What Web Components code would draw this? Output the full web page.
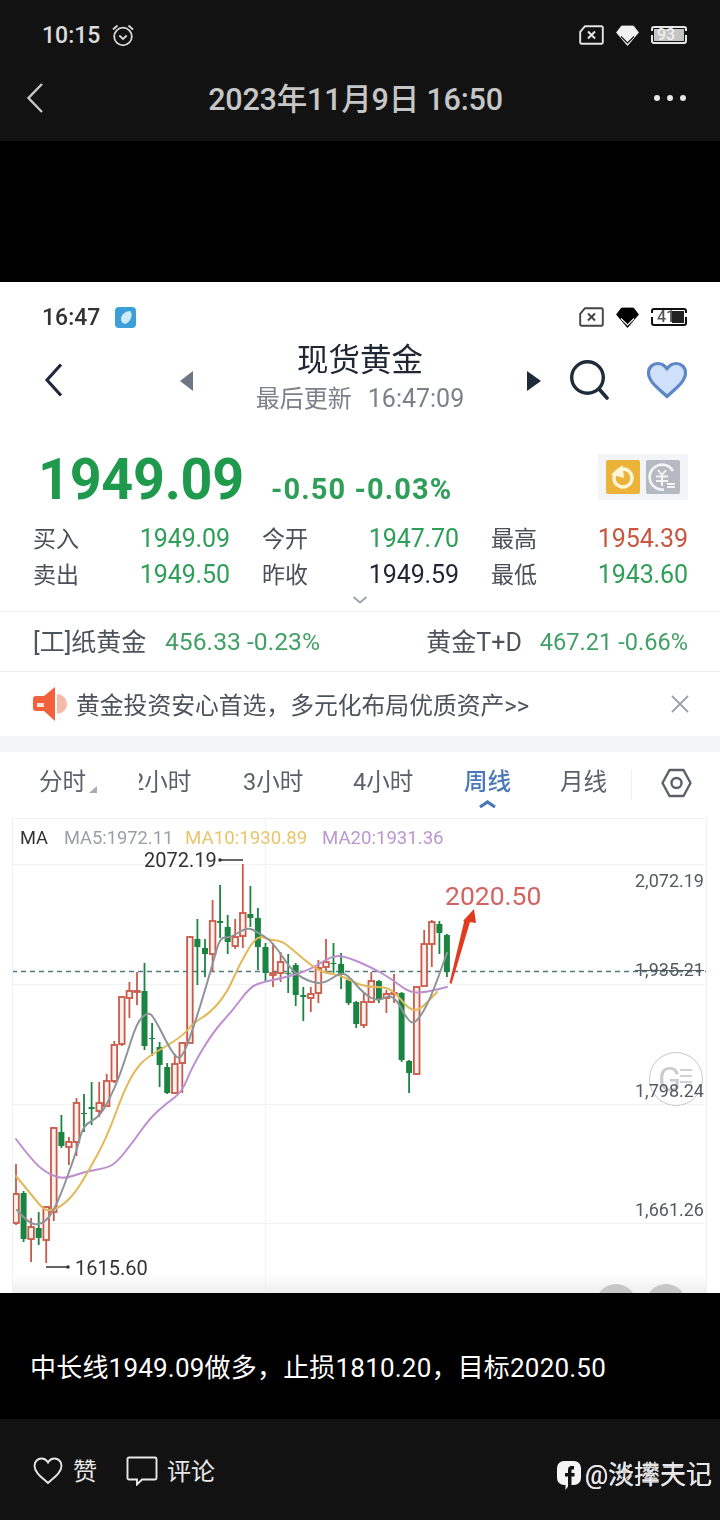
<!DOCTYPE html>
<html lang="zh"><head><meta charset="utf-8"><title>现货黄金</title>
<style>
html,body{margin:0;padding:0;background:#000}
body{width:720px;height:1520px;overflow:hidden;font-family:Roboto,"Noto Sans CJK SC",sans-serif}
.stack{display:flex;flex-direction:column;width:720px;height:1520px}
.gap{height:141px;background:#000;flex:none}
</style></head><body>
<div class="stack">
<top-bar></top-bar>
<div class="gap"></div>
<quote-screen></quote-screen>
<post-caption>中长线1949.09做多，止损1810.20，目标2020.50</post-caption>
<action-bar></action-bar>
</div>
<script>
const FONT='Roboto,"Noto Sans CJK SC",sans-serif';
function def(name,css,html,init){
  customElements.define(name,class extends HTMLElement{
    constructor(){super();const s=this.attachShadow({mode:'open'});
      s.innerHTML=`<style>:host{display:block;font-family:${FONT}}${css}</style>${typeof html==='function'?html(this):html}`;}
    connectedCallback(){if(init&&!this._d){this._d=1;init(this.shadowRoot,this)}}
  });
}
const sim=c=>`<svg width="25" height="20" viewBox="0 0 25 20"><path d="M6 1.2H22.5a1.3 1.3 0 0 1 1.3 1.3V17.5a1.3 1.3 0 0 1-1.3 1.3H2.5a1.3 1.3 0 0 1-1.3-1.3V6.8z" fill="none" stroke="${c}" stroke-width="1.9"/><path d="M9 6.5l7 7m0-7l-7 7" stroke="${c}" stroke-width="2" fill="none"/></svg>`;
const gem=(f,l)=>`<svg width="23" height="21" viewBox="0 0 23 21"><path d="M5.500 1H17.500L22.500 7.500 11.500 20.500 .5 7.500z" fill="${f}" stroke="${f}" stroke-width=".8" stroke-linejoin="round"/><path d="M5 11.500l6.500 6.500L18 11.500" fill="none" stroke="${l}" stroke-width="1.100"/></svg>`;

def('status-bar',`
:host{height:70px;flex:none}
.r{display:flex;align-items:center;height:70px;padding:0 33px 0 42px}
.t{font-size:23px;font-weight:500;color:var(--fg);width:69px}
.l{display:flex;align-items:center;width:100px}
.sp{flex:1}
.ic{display:flex;align-items:center;gap:12px}
.bat{position:relative;display:block;width:36px;height:18px;box-sizing:border-box;border:2px solid var(--bc);border-radius:3px;padding:1px}
.bat::before,.bat::after{content:"";position:absolute;top:3px;width:2px;height:4px;background:var(--sf)}
.bat::before{left:-2px}.bat::after{right:-2px}
.in{display:block;position:relative;height:100%;background:var(--bb);font-size:16px;line-height:12px;color:var(--bt);padding-left:3px;font-weight:500}
.in i{position:absolute;top:0;bottom:0;right:0;width:var(--bw);background:var(--bf)}
.in b{position:relative;font-weight:500}
`,h=>`<div class="r"><span class="t">${h.getAttribute('time')}</span><span class="l"><slot></slot></span><span class="sp"></span>
<span class="ic">${sim(h.getAttribute('sim'))}${gem(h.getAttribute('gf'),h.getAttribute('gs'))}<span class="bat"><span class="in"><i></i><b>${h.getAttribute('level')}</b></span></span></span></div>`);

def('top-bar',`
:host{background:#121212;height:141px;flex:none;display:block}
status-bar{--fg:#dcdcdc;--bc:#e6e6e6;--bt:#eeeeee;--bb:#c4c4c4;--bf:#c4c4c4;--bw:0px;--sf:#121212}
.n{display:flex;align-items:center;height:56px;padding:0 34px 0 26px;position:relative}
h1{flex:1;margin:0;text-align:center;font-size:30.500px;font-weight:500;color:#c6c6c6;letter-spacing:-.2px;padding-left:13px;margin-top:-2px}
.d{display:flex;gap:7px}.d i{width:6px;height:6px;border-radius:50%;background:#e6e6e6}
`,`<status-bar time="10:15" level="93" sim="#e4e4e4" gf="#f2f2f2" gs="#121212">
<svg width="24" height="25" viewBox="0 0 24 25"><circle cx="12" cy="13.500" r="8.800" fill="none" stroke="#d8d8d8" stroke-width="1.800"/><path d="M8.300 12.500l3.700 3.500 3.700-3.500" fill="none" stroke="#d8d8d8" stroke-width="1.800"/><path d="M2 6.500L6.500 2.500M22 6.500L17.500 2.500" stroke="#d8d8d8" stroke-width="1.800"/></svg></status-bar>
<div class="n"><svg width="18" height="32" viewBox="0 0 18 32"><path d="M16 2L2.500 16 16 30" fill="none" stroke="#c8c8c8" stroke-width="2.400"/></svg>
<h1>2023年11月9日 16:50</h1><span class="d"><i></i><i></i><i></i></span></div>`);

def('quote-header',`
:host{height:56px;flex:none}
.r{display:flex;align-items:center;height:56px;padding:0 32px 0 44px}
.m{flex:none;width:334px;display:flex;flex-direction:column;align-items:center}
.m b{font-weight:400;font-size:31.500px;line-height:40px;color:#1f2733;letter-spacing:0;margin-top:-2px}
.m span{font-size:24px;line-height:36px;color:#7b8089;display:flex;gap:16px;white-space:nowrap}
.m em{font-style:normal;font-size:25px}
.tr{position:absolute;top:89px}
`,`<div class="r"><svg width="20" height="36" viewBox="0 0 20 36"><path d="M17 2.500L3 18l14 15.500" fill="none" stroke="#1f2b3a" stroke-width="3.200"/></svg>
<svg class="tr" style="left:180px" width="14" height="20" viewBox="0 0 14 20"><path d="M13 0V20L0 10z" fill="#6d7682"/></svg>
<div class="m" style="margin-left:129px"><b>现货黄金</b><span>最后更新<em>16:47:09</em></span></div>
<svg class="tr" style="left:527px" width="14" height="20" viewBox="0 0 14 20"><path d="M0 0V20L14 10z" fill="#1f2b3a"/></svg>
<svg style="margin-left:42px" width="40" height="40" viewBox="0 0 40 40"><circle cx="18.500" cy="17.500" r="15.800" fill="none" stroke="#1f2b3a" stroke-width="3.400"/><path d="M30 29l8 9" stroke="#1f2b3a" stroke-width="3.600" stroke-linecap="round"/></svg>
<svg style="margin-left:37px" width="42" height="38" viewBox="0 0 42 38"><path d="M21 35.500C13 28 2.500 21 2.500 11.800 2.500 6 7 2.500 11.800 2.500c4 0 7.200 2.200 9.200 5.500 2-3.300 5.200-5.500 9.200-5.500C35 2.500 39.500 6 39.500 11.800 39.500 21 29 28 21 35.500z" fill="#cfe0fb" stroke="#5d87c7" stroke-width="3.200" stroke-linejoin="round"/></svg></div>`);

def('price-block',`
:host{height:56px;margin-top:42px;flex:none}
.r{display:flex;align-items:center;height:56px;padding:0 32px 0 38px}
.w{display:block;width:233px;flex:none}
.p{display:inline-block;font-size:58px;font-weight:700;color:#1f9a4c;letter-spacing:-.3px;line-height:56px;transform:scaleX(.96);transform-origin:0 50%;margin-top:2px}
.c{font-size:29px;font-weight:700;color:#2f9e58;margin-top:22px;flex:1;white-space:nowrap;letter-spacing:1.100px}
.b{display:flex;gap:6px;background:#f2f4f7;padding:6px 8px;height:34px;margin-top:-2px}
.b i{display:block;width:34px;height:34px;border-radius:2px}
`,`<div class="r"><span class="w"><span class="p">1949.09</span></span><span class="c">-0.50 -0.03%</span>
<div class="b"><i style="background:#ecb33a"><svg width="34" height="34" viewBox="0 0 34 34"><circle cx="17" cy="18" r="9" fill="none" stroke="#fff7d8" stroke-width="3.400"/><path d="M5 14.500L16.500 5 18 18z" fill="#fff7d8"/></svg></i>
<i style="background:#b4b9c2"><svg width="34" height="34" viewBox="0 0 34 34"><path d="M27 11A12.500 12.500 0 1 0 18 29.500" fill="none" stroke="#f4f5f7" stroke-width="2.600"/><path d="M12 10l4 5 4-5M10 16.500h12M10 21h12M16 15v11M21 24h8M29 27h-8" fill="none" stroke="#f4f5f7" stroke-width="2"/></svg></i></div></div>`);

def('quote-table',`
:host{margin-top:14px;flex:none}
.g{display:grid;grid-template-columns:repeat(3,197px);column-gap:32px;padding-left:33px}
.c{display:flex;justify-content:space-between;align-items:center;height:36px}
.l{font-size:23px;color:#4c5159;margin-bottom:3px}
.v{font-size:25px;letter-spacing:-.1px}
.g0{color:#2f9e58}.k{color:#1e2633}.r{color:#c9573f}
`,()=>{const d=[['买入','1949.09','g0'],['今开','1947.70','g0'],['最高','1954.39','r'],['卖出','1949.50','g0'],['昨收','1949.59','k'],['最低','1943.60','g0']];
return `<div class="g">${d.map(x=>`<div class="c"><span class="l">${x[0]}</span><span class="v ${x[2]}">${x[1]}</span></div>`).join('')}</div>`});

def('expand-hint',`:host{height:19px;flex:none}.w{display:flex;justify-content:center;padding-top:4px}`,
`<div class="w"><svg width="16" height="8" viewBox="0 0 16 8"><path d="M1.500 1l6.500 5.500L14.500 1" fill="none" stroke="#9aa0a8" stroke-width="1.800"/></svg></div>`);

def('related-row',`
:host{height:59px;border-top:1px solid #eef0f2;border-bottom:1px solid #eef0f2;flex:none}
.r{display:flex;align-items:center;height:59px;padding:0 32px 0 33px;font-size:25px;color:#4d535b}
.g{color:#43a066;font-size:24.700px;white-space:nowrap}
.a{width:132px;margin-bottom:3px}.s{flex:1}.b{margin-right:18px;margin-bottom:3px}
`,`<div class="r"><span class="a">[工]纸黄金</span><span class="g">456.33 -0.23%</span><span class="s"></span><span class="b">黄金T+D</span><span class="g" style="font-size:23.600px">467.21 -0.66%</span></div>`);

def('ad-banner',`
:host{height:64px;flex:none}
.r{display:flex;align-items:center;height:64px;padding:0 30px 0 32px;font-size:23.800px;color:#4d535b}
span{flex:1;margin-left:9px;white-space:nowrap;margin-bottom:2px}
`,`<div class="r"><svg width="35" height="36" viewBox="0 0 35 36"><path d="M25 8a10 10 0 0 1 0 20z" fill="#f7b9a8"/><path d="M4 10h8L23 1v34L12 25H4a3 3 0 0 1-3-3V13a3 3 0 0 1 3-3z" fill="#f3603c"/><rect x="5" y="17" width="7" height="4" fill="#fde3db"/></svg>
<span>黄金投资安心首选，多元化布局优质资产&gt;&gt;</span>
<svg width="20" height="20" viewBox="0 0 20 20"><path d="M2 2l16 16M18 2L2 18" stroke="#9da3ab" stroke-width="1.900"/></svg></div>`);

def('chart-tabs',`
:host{height:66px;flex:none;background:#fff}
.r{display:flex;align-items:flex-start;height:66px;font-size:23.600px;color:#5c6169;padding-left:39px;position:relative}
span{white-space:nowrap;line-height:60px;display:block}
.cut{clip-path:inset(0 0 0 8px)}
.act{color:#4a78b8;font-weight:500;position:relative}
.act svg{position:absolute;left:15px;top:48px}
.tri{position:absolute;left:89px;top:34px}
.div{position:absolute;left:631px;top:18px;width:1px;height:30px;background:#eff1f3}
.hex{position:absolute;left:661px;top:15px}
`,`<div class="r"><span style="width:92px">分时</span><svg class="tri" width="8" height="7" viewBox="0 0 8 7"><path d="M8 0V7H0z" fill="#a8adb4"/></svg>
<span class="cut" style="width:112px">2小时</span><span style="width:110px">3小时</span><span style="width:111px">4小时</span>
<span class="act" style="width:96px">周线<svg width="17" height="8" viewBox="0 0 17 8"><path d="M1 7l7.500-5L16 7" fill="none" stroke="#4a78b8" stroke-width="3.200"/></svg></span><span>月线</span>
<i class="div"></i><svg class="hex" width="31" height="32" viewBox="0 0 31 32"><path d="M8.500 3h14l7 13-7 13h-14l-7-13z" fill="none" stroke="#5c6169" stroke-width="2.400" stroke-linejoin="round"/><circle cx="15.500" cy="16" r="5" fill="none" stroke="#5c6169" stroke-width="2.400"/></svg></div>`);

const C=[[1164,1225,1194,1223,'r'],[1191,1242,1193,1239,'g'],[1218,1262,1227,1239,'r'],[1212,1245,1228,1238,'g'],[1207,1263,1207,1240,'r'],[1127,1221,1128,1212,'r'],[1115,1148,1132,1146,'g'],[1137,1165,1142,1147,'r'],[1098,1156,1103,1142,'r'],[1094,1132,1113,1114,'g'],[1082,1125,1107,1109,'g'],[1082,1117,1103,1111,'r'],[1074,1107,1081,1106,'r'],[1041,1083,1045,1081,'r'],[996,1046,997,1044,'r'],[982,1018,991,998,'r'],[972,1005,991,992,'r'],[963,1050,991,1046,'g'],[1023,1056,1038,1039,'g'],[1042,1087,1047,1065,'g'],[1063,1094,1067,1093,'g'],[1054,1094,1064,1093,'r'],[1042,1093,1043,1063,'r'],[936,1043,937,1043,'r'],[919,985,939,947,'g'],[939,977,948,954,'g'],[900,972,921,954,'r'],[885,938,921,923,'g'],[915,954,927,942,'g'],[919,949,937,946,'r'],[864,948,913,936,'r'],[886,927,914,918,'g'],[908,970,918,947,'g'],[943,982,947,973,'g'],[943,987,973,975,'r'],[952,982,962,973,'r'],[954,993,973,974,'g'],[963,1006,965,995,'g'],[987,1021,995,997,'g'],[987,1012,994,998,'r'],[960,1003,968,993,'r'],[939,973,962,967,'r'],[943,973,963,964,'g'],[953,989,964,975,'g'],[978,1005,980,1003,'g'],[1001,1028,1002,1024,'g'],[993,1028,1002,1025,'r'],[972,1003,981,1002,'r'],[980,1003,981,1000,'g'],[990,1013,994,998,'r'],[974,1003,993,994,'r'],[992,1062,993,1060,'g'],[1060,1093,1061,1073,'g'],[986,1075,987,1074,'r'],[930,986,944,986,'r'],[920,967,922,944,'r'],[921,954,924,933,'g'],[934,977,935,972,'g']];
const MA5=[[17,1210],[28,1223],[40,1225],[50,1217],[60,1197],[77,1150],[83,1125],[100,1117],[115,1088],[125,1060],[137,1022],[147,1013],[153,1015],[173,1055],[182,1060],[197,1017],[213,963],[220,937],[230,938],[247,927],[257,932],[273,942],[293,973],[313,983],[325,983],[340,973],[348,975],[363,993],[378,1002],[393,993],[409,1023],[417,1022],[430,1000],[447,953]];
const MA10=[[16,1176],[30,1193],[43,1209],[50,1211],[62,1206],[75,1193],[88,1172],[107,1137],[123,1093],[135,1070],[147,1057],[182,1037],[193,1023],[210,1013],[227,993],[240,963],[257,935],[270,940],[282,941],[293,950],[313,967],[325,973],[340,975],[353,982],[367,987],[387,987],[397,995],[410,1010],[420,1010],[437,992]];
const MA20=[[16,1139],[33,1162],[50,1175],[65,1179],[83,1172],[107,1168],[117,1162],[133,1142],[150,1118],[167,1103],[182,1092],[192,1067],[213,1032],[233,1010],[250,987],[263,982],[283,978],[310,970],[333,955],[347,957],[373,968],[393,980],[410,993],[427,992],[447,987]];
function smooth(p){let d=`M${p[0][0]} ${p[0][1]}`;for(let i=1;i<p.length-1;i++){const m=[(p[i][0]+p[i+1][0])/2,(p[i][1]+p[i+1][1])/2];d+=`Q${p[i][0]} ${p[i][1]} ${m[0]} ${m[1]}`}const l=p[p.length-1];return d+`L${l[0]} ${l[1]}`}
function kline(){
  const RED='#c95a4a',GRN='#1b8442';let s='';
  C.forEach((c,i)=>{const x=+(16+7.56*i).toFixed(1);const col=c[4]==='r'?RED:GRN;
    s+=`<path d="M${x} ${c[0]}V${c[2]}M${x} ${c[3]}V${c[1]}" stroke="${col}" stroke-width="1.800"/>`;
    const h=Math.max(c[3]-c[2],1);
    if(c[4]==='r')s+=`<rect x="${x-2.800}" y="${c[2]}" width="5.600" height="${h}" fill="#fdf1ed" stroke="${col}" stroke-width="1.800"/>`;
    else s+=`<rect x="${x-3}" y="${c[2]}" width="6" height="${h}" fill="${col}"/>`;
  });
  return s;
}
def('kline-chart',`
:host{position:relative;height:475px;margin-left:12px;width:695px;box-sizing:border-box;border:1px solid #eff1f3;border-width:1px 1px 0;background:#fff;flex:none;overflow:hidden}
svg.c{position:absolute;left:-1px;top:-1px}
.lg{display:flex;font-size:18.300px;padding:9px 0 0 7px;line-height:20px;position:relative}
.lg span{white-space:nowrap}
.t{position:absolute;white-space:nowrap;line-height:1}
.ax{font-size:18px;color:#555a60;right:2px}
.shade{position:absolute;left:0;right:0;bottom:0;height:18px;background:linear-gradient(#fff0,#eeeeee)}
.g{position:absolute;left:636px;top:233px;width:54px;height:54px;box-sizing:border-box;border:1.500px solid #c6c8cb;border-radius:50%;background:#fffc}
.g b{position:absolute;left:8px;top:9px;font-size:34px;font-weight:400;line-height:34px;color:#c9cbce}
.g u{position:absolute;left:30px;width:12px;height:2px;background:#cfd1d4}
.btn{position:absolute;top:465px;width:40px;height:40px;border-radius:50%;background:#c7c7c7}
`,`<svg class="c" width="695" height="475" viewBox="12 818 695 475">
<g stroke="#f1f2f3" stroke-width="1"><path d="M12 864.500H707M12 984.500H707M12 1104.500H707M12 1223.500H707M265.500 818V1293"/></g>
<path d="M12 971.500H707" stroke="#4f7b80" stroke-width="1.500" stroke-dasharray="5 4"/>
<g id="k"></g>
<g fill="none" stroke-width="2" stroke-linecap="round" stroke-linejoin="round">
<path d="${smooth(MA20)}" stroke="#bd8fd0"/><path d="${smooth(MA10)}" stroke="#e3b858"/><path d="${smooth(MA5)}" stroke="#8f9498"/></g>
<path d="M449.500 983L451.500 984 470 922 464.500 920z" fill="#e13b1f"/><path d="M463 921L474 909 476 923z" fill="#e13b1f"/>
<path d="M220 860H243M46 1267H68" stroke="#333" stroke-width="1.300"/><circle cx="220" cy="860" r="1.800" fill="#333"/><circle cx="68" cy="1267" r="1.800" fill="#333"/>
</svg>
<div class="lg"><span style="color:#333;width:44px">MA</span><span style="color:#9a9ea5;width:121px">MA5:1972.11</span><span style="color:#e9c56b;width:137px;font-size:18.700px">MA10:1930.89</span><span style="color:#bb96cf;font-size:18.600px">MA20:1931.36</span></div>
<span class="g"><b>G</b><u style="top:16px"></u><u style="top:22px"></u><u style="top:28px"></u></span>
<span class="t" style="left:131px;top:31px;font-size:20px;color:#333">2072.19</span>
<span class="t" style="left:62px;top:439px;font-size:20px;color:#333">1615.60</span>
<span class="t" style="left:432px;top:64px;font-size:26.500px;color:#d4635f">2020.50</span>
<span class="t ax" style="top:53px">2,072.19</span>
<span class="t ax" style="top:142px;text-decoration:line-through;text-decoration-thickness:1px">1,935.21</span>
<span class="t ax" style="top:263px">1,798.24</span>
<span class="t ax" style="top:382px">1,661.26</span>
<i class="shade"></i><i class="btn" style="left:583px"></i><i class="btn" style="left:633px"></i>`,
r=>{r.getElementById('k').innerHTML=kline()});

def('quote-screen',`
:host{height:1011px;background:#fff;flex:none;overflow:hidden;display:block}
.w{display:flex;flex-direction:column;height:1011px;position:relative;filter:blur(.35px)}
status-bar{--fg:#333;--bc:#111;--bt:#555;--bb:#fff;--bf:#222;--bw:12px;--sf:#fff}
.band{height:16px;background:#f3f5f7;flex:none}
`,`<div class="w"><status-bar time="16:47" level="41" sim="#444" gf="#000" gs="#fff">
<svg width="21" height="21" viewBox="0 0 21 21" style="margin-left:4px"><rect width="21" height="21" rx="4" fill="#3d9fd8"/><path d="M15 4c-4 0-8 3-9 7-.5 3 1 5 4 6 3-1 6-4 6.500-8 .2-2-.2-4-1.500-5z" fill="#cfe9f8"/></svg></status-bar>
<quote-header></quote-header><price-block></price-block><quote-table></quote-table><expand-hint></expand-hint>
<related-row></related-row><ad-banner></ad-banner><div class="band"></div><chart-tabs></chart-tabs><kline-chart></kline-chart></div>`);

def('post-caption',`:host{height:126px;background:#000;flex:none;box-sizing:border-box;padding:50px 0 0 30px;font-size:26px;line-height:50px;color:#fff;white-space:nowrap;letter-spacing:.2px}`,`<slot></slot>`);

def('action-bar',`
:host{height:101px;background:#121212;flex:none}
.r{display:flex;align-items:center;height:40px;padding:32px 8px 0 33px;font-size:24px;color:#e8e8e8}
.z{margin-left:10px;margin-bottom:4px}
.cm{margin-left:29px}
.s{flex:1}
.wm{position:relative;display:flex;align-items:center;margin-top:2px;font-size:26px;color:#e8e8e8;white-space:nowrap}
.wm svg{margin-top:6px}
.wm span{margin-left:3px;position:relative}
.wm em{position:absolute;left:0;top:0;font-style:normal;opacity:.85}
`,`<div class="r"><svg width="30" height="28" viewBox="0 0 30 28"><path d="M15 26C9 20.500 1.500 15.500 1.500 8.800 1.500 4.500 4.800 1.500 8.500 1.500c2.800 0 5 1.500 6.500 4 1.500-2.500 3.700-4 6.500-4 3.700 0 7 3 7 7.300C28.500 15.500 21 20.500 15 26z" fill="none" stroke="#e8e8e8" stroke-width="1.900"/></svg><span class="z">赞</span>
<svg class="cm" width="32" height="30" viewBox="0 0 32 30"><path d="M3 1.500H29a1.500 1.500 0 0 1 1.500 1.500V22a1.500 1.500 0 0 1-1.500 1.500H16l-5 5v-5H3A1.500 1.500 0 0 1 1.500 22V3A1.500 1.500 0 0 1 3 1.500z" fill="none" stroke="#e8e8e8" stroke-width="1.900"/></svg><span class="z" style="margin-left:9px">评论</span>
<span class="s"></span>
<span class="wm"><svg width="26" height="32" viewBox="0 0 26 32"><path d="M8 2H18a7 7 0 0 1 7 7V19a7 7 0 0 1-7 7H13l-3.500 5V26H8a7 7 0 0 1-7-7V9a7 7 0 0 1 7-7z" fill="#f4f4f4"/><path d="M18 7h-2.500c-2.200 0-3.500 1.400-3.500 3.700V14H9v3.500h3V29h3.500V17.500H18.500V14h-3v-2.500c0-.8.300-1 1-1H18z" fill="#121212"/></svg><span>@淡摔天记<em>@渋撵夫记</em></span></span></div>`);
</script>
</body></html>
